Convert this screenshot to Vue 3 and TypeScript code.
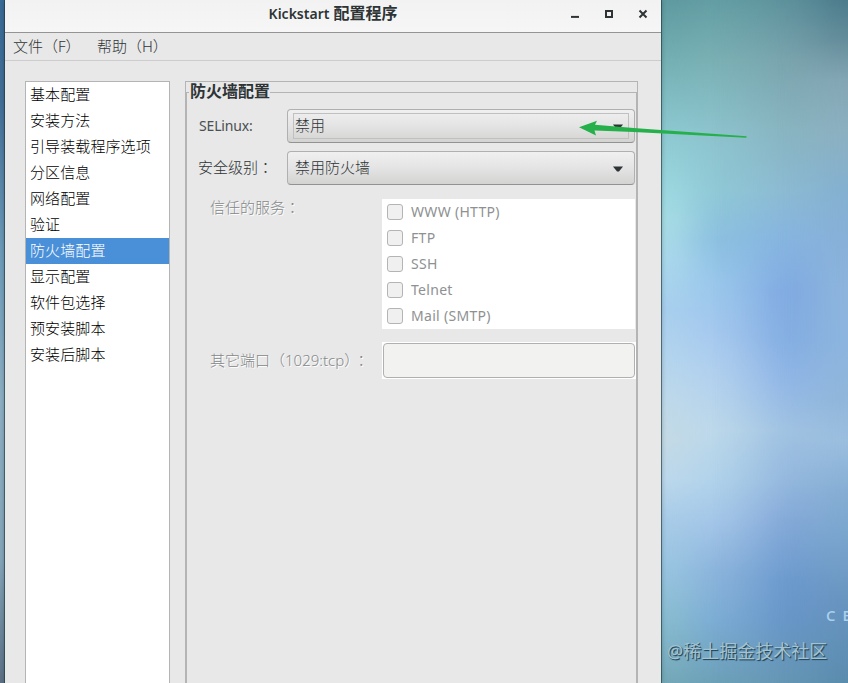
<script setup lang="ts">
import { ref } from 'vue'

const sections: string[] = [
  '基本配置',
  '安装方法',
  '引导装载程序选项',
  '分区信息',
  '网络配置',
  '验证',
  '防火墙配置',
  '显示配置',
  '软件包选择',
  '预安装脚本',
  '安装后脚本',
]
const current = ref(6)
const services: string[] = ['WWW (HTTP)', 'FTP', 'SSH', 'Telnet', 'Mail (SMTP)']
</script>

<template>
  <div class="desktop">
    <div class="wall wall-a"></div>
    <div class="wall wall-b"></div>
    <div class="wall wall-c"></div>
    <div class="wall wall-d"></div>

    <main class="window">
      <header class="titlebar">
        <h1 class="title"><span class="title-latin">Kickstart</span>配置程序</h1>
        <div class="controls">
          <svg width="10" height="12" viewBox="0 0 10 12"><path d="M1 8.900h8" stroke="#2e3436" stroke-width="2" /></svg>
          <svg width="10" height="12" viewBox="0 0 10 12"><path d="M2 3h6v6H2z" fill="none" stroke="#2e3436" stroke-width="2" /></svg>
          <svg width="10" height="12" viewBox="0 0 10 12"><path d="M1.500 2.500l7 7M8.500 2.500l-7 7" stroke="#2e3436" stroke-width="2" /></svg>
        </div>
      </header>
      <nav class="menubar">
        <span class="menu">文件（F）</span>
        <span class="menu">帮助（H）</span>
      </nav>

      <div class="content">
        <ul class="sections">
          <li
            v-for="(name, i) in sections"
            :key="name"
            class="section"
            :class="{ selected: i === current }"
            @click="current = i"
          >{{ name }}</li>
        </ul>

        <section class="outer-frame">
          <div class="inner-frame">
            <h2 class="legend">防火墙配置</h2>
            <div class="row">
              <span class="label latin">SELinux:</span>
              <div class="combo focused">
                <span>禁用</span>
                <svg class="caret" width="10" height="6" viewBox="0 0 10 6"><path d="M0 .5h10L6 5.500H4z" fill="#2e3436" /></svg>
              </div>
            </div>
            <div class="row second">
              <span class="label">安全级别<span class="colon">：</span></span>
              <div class="combo">
                <span>禁用防火墙</span>
                <svg class="caret" width="10" height="6" viewBox="0 0 10 6"><path d="M0 .5h10L6 5.500H4z" fill="#2e3436" /></svg>
              </div>
            </div>
            <div class="row trusted">
              <span class="sublabel">信任的服务<span class="colon">：</span></span>
              <div class="services">
                <div v-for="s in services" :key="s" class="service">
                  <span class="check"></span><span class="service-name">{{ s }}</span>
                </div>
              </div>
            </div>
            <div class="row ports">
              <span class="sublabel port-label">其它端口（<span class="port-text">1029:tcp</span>）<span class="colon">：</span></span>
              <div class="entry-wrap"><div class="entry"></div></div>
            </div>
          </div>
        </section>
      </div>
    </main>

    <span class="brand">CE</span>
    <span class="watermark">@稀土掘金技术社区</span>
    <svg class="arrow" width="170" height="18" viewBox="578 120 170 18">
      <path d="M579 127.200L597 120.700L595 124.800L633.500 128L746.500 136.300V137.700L633.500 132L594.500 130.500L596 135.500Z" fill="#25b04b" />
    </svg>
  </div>
</template>

<style>
body {
  overflow: hidden;
}
</style>

<style scoped>
.desktop {
  position: relative;
  box-sizing: border-box;
  width: 848px;
  height: 683px;
  padding-left: 5px;
  overflow: hidden;
  background: linear-gradient(#3a6b98 0, #426f98 100px, #6d9cba 250px, #8fb0c6 400px, #86a6ba 560px, #5d7186 683px);
  font-family: "Noto Sans", "Noto Sans CJK SC", sans-serif;
  font-size: 15px;
  color: #2e3436;
}
.wall {
  position: absolute;
  top: 0;
  left: 661px;
  width: 187px;
  height: 683px;
}
.wall-a {
  background: linear-gradient(#5f9aa0 0, #74b0b4 60px, #8cc8d0 130px, #9cd8e0 190px, #a6dce4 220px, #aad8ec 260px, #a8cfee 310px, #b4d5ee 360px, #bed9ea 400px, #c4dae6 440px, #bcd8ec 480px, #a8cce8 520px, #98c4e0 570px, #88bcd0 620px, #74a8b8 683px);
}
.wall-b {
  background: linear-gradient(#649ea4 0, #7ab0b4 60px, #8cc2cc 130px, #90c8d6 190px, #8cc0e0 240px, #98c6ea 280px, #a4c8ee 330px, #b0cfee 370px, #bcd8ea 430px, #b0d2ea 480px, #a4c6e8 520px, #8cb4dc 570px, #7cacd4 620px, #6ca0b8 683px);
  mask-image: linear-gradient(90deg, transparent 0, rgba(0, 0, 0, 0.16) 16px, rgba(0, 0, 0, 0.5) 31px, rgba(0, 0, 0, 0.84) 46px, #000 62px);
}
.wall-c {
  background: linear-gradient(#5e929c 0, #7aa4ae 60px, #88b4c0 130px, #8cbad2 190px, #86b4e0 240px, #80aae2 290px, #84aee2 340px, #90b6e6 380px, #a0c2e2 430px, #94b8de 480px, #84a9d8 520px, #6c9ace 580px, #6896c8 620px, #6696b4 683px);
  mask-image: linear-gradient(90deg, transparent 50px, rgba(0, 0, 0, 0.16) 69px, rgba(0, 0, 0, 0.5) 92px, rgba(0, 0, 0, 0.84) 113px, #000 133px);
}
.wall-d {
  background: linear-gradient(#4c7c8c 0, #648c9a 40px, #84a6b4 80px, #8cb0c0 130px, #84b0d0 190px, #88b0d8 240px, #8cb4dc 290px, #8cb4de 340px, #90b6da 400px, #9abede 440px, #86aed4 490px, #78a4cc 540px, #6894c0 600px, #5a8cae 683px);
  mask-image: linear-gradient(90deg, transparent 115px, rgba(0, 0, 0, 0.16) 135px, rgba(0, 0, 0, 0.5) 155px, rgba(0, 0, 0, 0.84) 171px, #000 187px);
}
.window {
  position: relative;
  display: flex;
  flex-direction: column;
  width: 656px;
  height: 683px;
  background: #e8e8e8;
  box-shadow: 0 0 0 1px rgba(30, 55, 60, 0.6), 0 0 5px rgba(0, 30, 40, 0.4);
}
.titlebar {
  position: relative;
  display: flex;
  flex: none;
  justify-content: center;
  box-sizing: border-box;
  height: 33px;
  border-bottom: 1px solid #949494;
  background: linear-gradient(#f2f2f2, #f6f6f6);
}
.title {
  margin: 0;
  font-size: 16px;
  line-height: 26px;
  font-weight: 700;
  white-space: nowrap;
}
.title-latin {
  margin-right: 4px;
  font-size: 14px;
  font-weight: 600;
}
.controls {
  position: absolute;
  top: 8px;
  right: 13px;
  display: flex;
  gap: 24px;
}
.controls svg,
.caret {
  display: block;
}
.menubar {
  display: flex;
  flex: none;
  gap: 16px;
  box-sizing: border-box;
  height: 28px;
  padding-left: 8px;
  border-bottom: 1px solid #cccccc;
  font-weight: 300;
  line-height: 27px;
}
.menu {
  white-space: nowrap;
  width: 68px;
}
.content {
  display: flex;
  flex: 1;
  gap: 15px;
  padding: 20px 0 0 20px;
}
.sections {
  box-sizing: border-box;
  width: 145px;
  margin: 0;
  padding: 0;
  list-style: none;
  border: 1px solid #b4b4b4;
  border-bottom: 0;
  background: #fff;
  color: #000;
  font-weight: 300;
}
.section {
  box-sizing: border-box;
  height: 26px;
  padding-left: 4px;
  line-height: 24px;
  letter-spacing: 0.1px;
  white-space: nowrap;
}
.selected {
  background: #4a90d9;
  color: #fff;
}
.outer-frame {
  box-sizing: border-box;
  width: 453px;
  padding-top: 10px;
  border: 1px solid #b4b4b4;
  border-bottom: 0;
}
.inner-frame {
  box-sizing: border-box;
  height: 100%;
  border: 1px solid #b4b4b4;
  border-bottom: 0;
}
.legend {
  width: 80px;
  height: 22px;
  margin: -12px 0 0 2px;
  padding-left: 1px;
  background: linear-gradient(transparent 9px, #e8e8e8 9px);
  font-size: 16px;
  line-height: 21px;
  white-space: nowrap;
}
.row {
  display: flex;
  margin-top: 6px;
}
.label {
  flex: none;
  box-sizing: border-box;
  width: 100px;
  padding-left: 11px;
  font-weight: 300;
  line-height: 32px;
  white-space: nowrap;
}
.latin {
  padding-left: 12px;
  color: #4a4f51;
  font-size: 14px;
  font-weight: 400;
  line-height: 33px;
  letter-spacing: -0.15px;
}
.colon {
  font-family: "Noto Sans CJK TC", sans-serif;
}
.combo {
  position: relative;
  display: flex;
  align-items: center;
  justify-content: space-between;
  box-sizing: border-box;
  flex: none;
  width: 348px;
  height: 34px;
  padding: 0 11px 3px 7px;
  border: 1px solid #b0b0b0;
  border-bottom-color: #929292;
  border-radius: 4px;
  background: linear-gradient(#f0f0f0, #e4e4e4 50%, #d3d3d2);
  font-weight: 300;
}
.caret {
  position: relative;
  top: 2px;
}
.focused::after {
  content: "";
  position: absolute;
  inset: 3px 5px;
  border: 1px solid #c0c0c0;
}
.second {
  margin-top: 8px;
}
.trusted {
  margin-top: 14px;
}
.sublabel {
  flex: none;
  box-sizing: border-box;
  width: 195px;
  padding-left: 23px;
  color: #858889;
  text-shadow: 1px 1px 0 #fff;
  font-weight: 300;
  line-height: 16px;
  white-space: nowrap;
}
.services {
  box-sizing: border-box;
  flex: none;
  width: 253px;
  height: 130px;
  background: #fff;
}
.service {
  display: flex;
  align-items: center;
  gap: 8px;
  height: 26px;
  padding-left: 5px;
  color: #8e9192;
  font-size: 14px;
}
.service-name {
  padding-bottom: 2px;
  letter-spacing: 0.3px;
}
.check {
  box-sizing: border-box;
  width: 16px;
  height: 16px;
  border: 1px solid #b4b4b4;
  border-radius: 3px;
  background: #f0f0f0;
}
.ports {
  margin-top: 13px;
}
.port-label {
  line-height: 35px;
}
.port-text {
  font-size: 15px;
}
.port-label .colon {
  margin-left: 2px;
}
.entry-wrap {
  box-sizing: border-box;
  flex: none;
  width: 254px;
  height: 37px;
  padding: 1px;
  background: #fff;
}
.entry {
  box-sizing: border-box;
  height: 35px;
  border: 1px solid #b0b0ae;
  border-radius: 4px;
  background: #f2f2f0;
}
.brand {
  position: absolute;
  top: 605px;
  left: 826px;
  color: #a9d0ec;
  font-family: "Open Sans", sans-serif;
  font-size: 15px;
  font-weight: 600;
  line-height: 20px;
  letter-spacing: 7px;
}
.watermark {
  position: absolute;
  top: 638px;
  left: 667px;
  color: #a4c3d2;
  font-size: 18px;
  line-height: 26px;
  text-shadow: 1px 1px 1px #204458, 1px 1px 0 #4f7689;
  white-space: nowrap;
}
.arrow {
  position: absolute;
  top: 120px;
  left: 578px;
}
</style>
